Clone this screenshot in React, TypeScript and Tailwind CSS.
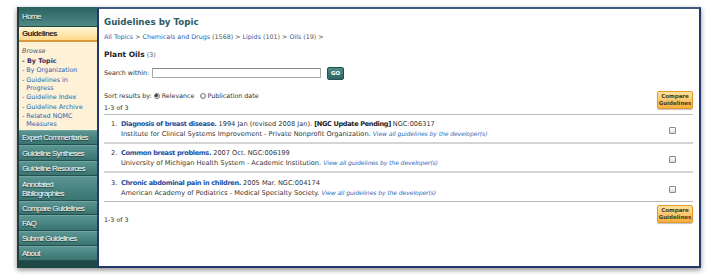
import React from "react";

const navItems = [
  { label: ["Expert Commentaries"], h: "h-[15px]" },
  { label: ["Guideline Syntheses"], h: "h-[16px]" },
  { label: ["Guideline Resources"], h: "h-[15px]" },
  { label: ["Annotated", "Bibliographies"], h: "h-[25px]" },
  { label: ["Compare Guidelines"], h: "h-[14px]" },
  { label: ["FAQ"], h: "h-[16px]" },
  { label: ["Submit Guidelines"], h: "h-[15px]" },
  { label: ["About"], h: "h-[15px]" },
];

const browseLinks = [
  { label: "By Topic", active: true },
  { label: "By Organization" },
  { label: "Guidelines in Progress", wrap: ["Guidelines in", "Progress"] },
  { label: "Guideline Index" },
  { label: "Guideline Archive" },
  { label: "Related NQMC Measures", wrap: ["Related NQMC", "Measures"] },
];

const results = [
  {
    title: "Diagnosis of breast disease.",
    meta: " 1994 Jan (revised 2008 Jan). ",
    pending: true,
    ngc: "NGC:006317",
    org: "Institute for Clinical Systems Improvement - Private Nonprofit Organization.",
  },
  {
    title: "Common breast problems.",
    meta: " 2007 Oct. ",
    ngc: "NGC:006199",
    org: "University of Michigan Health System - Academic Institution.",
  },
  {
    title: "Chronic abdominal pain in children.",
    meta: " 2005 Mar. ",
    ngc: "NGC:004174",
    org: "American Academy of Pediatrics - Medical Specialty Society.",
  },
];

const navText =
  "font-['Liberation_Sans',sans-serif] text-[8px] tracking-[-0.6px] leading-[9px] whitespace-nowrap";

const CompareButton = () => (
  <div className="w-[36px] h-[18px] rounded-[2px] border border-[#e39a2a] bg-gradient-to-b from-[#ffe29a] to-[#f8ad3a] shadow-[0_1px_1px_rgba(0,0,0,0.25)] flex flex-col items-center justify-center text-[5.5px] leading-[7px] font-bold text-[#4a3b17]">
    <span>Compare</span>
    <span>Guidelines</span>
  </div>
);

const Radio = ({ on }: { on?: boolean }) => (
  <span className="w-[6px] h-[6px] rounded-full border border-[#777] bg-gradient-to-b from-white to-[#ddd] flex items-center justify-center">
    {on && <span className="w-[3px] h-[3px] rounded-full bg-[#333]" />}
  </span>
);

export default function App() {
  return (
    <div className="w-[721px] h-[275px] bg-white overflow-hidden font-['DejaVu_Sans',sans-serif] text-[#333]">
      <div className="ml-[17px] mt-[7px] w-[684px] h-[261px] flex shadow-[0_2px_5px_rgba(0,0,0,0.45)]">
        {/* sidebar */}
        <div className="w-[80px] h-full border-l-2 border-[#263c3c] bg-[#1f4847] flex flex-col">
          <div className={`h-[20px] flex items-center pl-[3px] bg-gradient-to-b from-[#2a6160] to-[#4f8a87] border-b border-[#1f4a49] text-white [text-shadow:0_1px_1px_rgba(0,0,0,0.6)] ${navText}`}>
            Home
          </div>
          <div className={`h-[15px] flex items-center pl-[3px] bg-gradient-to-b from-[#fff6d6] to-[#fcd98a] border-b-2 border-[#d89a3c] text-[#2a2a2a] font-bold ${navText}`}>
            Guidelines
          </div>
          <div className="h-[88px] bg-[#fdf2d8] pl-[3px] pt-[5px] text-[6.4px] leading-[8px] whitespace-nowrap">
            <div className="italic text-[#555]">Browse</div>
            {browseLinks.map((l) => (
              <div key={l.label} className="mt-[1.5px] flex">
                <span className={l.active ? "text-[#3a2b58] font-bold" : "text-[#2c62b0]"}>-&nbsp;</span>
                <div className={l.active ? "text-[#3a2b58] font-bold" : "text-[#2c62b0]"}>
                  {l.wrap ? l.wrap.map((w) => <div key={w}>{w}</div>) : l.label}
                </div>
              </div>
            ))}
          </div>
          {navItems.map((n) => (
            <div
              key={n.label.join(" ")}
              className={`${n.h} flex flex-col justify-center pl-[3px] bg-gradient-to-b from-[#5a9592] to-[#3a7471] border-t border-[#6fa5a2] border-b border-b-[#234f4e] text-white [text-shadow:0_1px_1px_rgba(0,0,0,0.6)] ${navText}`}
            >
              {n.label.map((t) => (
                <span key={t}>{t}</span>
              ))}
            </div>
          ))}
          <div className="flex-1 bg-[#1f4847]" />
        </div>

        {/* content */}
        <div className="flex-1 h-full border-2 border-[#22386a] border-t-[#3f5a80] bg-white pl-[5px] pr-[6px] text-[6.35px] whitespace-nowrap">
          <div className="h-[14px] mt-[7px] flex items-center text-[8.7px] font-bold text-[#2d5a66]">
            Guidelines by Topic
          </div>
          <div className="h-[10px] mt-[2px] flex items-center text-[#555]">
            <span className="text-[#2c62b0]">All Topics</span>&nbsp;&gt;&nbsp;
            <span className="text-[#2c62b0]">Chemicals and Drugs</span>&nbsp;(1568)&nbsp;&gt;&nbsp;
            <span className="text-[#2c62b0]">Lipids</span>&nbsp;(101)&nbsp;&gt;&nbsp;
            <span className="text-[#2c62b0]">Oils</span>&nbsp;(19)&nbsp;&gt;
          </div>
          <div className="h-[12px] mt-[7px] flex items-center">
            <span className="text-[7.5px] font-bold text-[#222]">Plant Oils</span>
            <span className="ml-[2px] text-[#555]">(3)</span>
          </div>
          <div className="h-[14px] mt-[5px] flex items-center">
            <span>Search within:</span>
            <div className="ml-[3px] w-[169px] h-[10px] border border-[#aaa] border-t-[#888] bg-white" />
            <div className="ml-[6px] w-[17px] h-[13px] rounded-[2px] border border-[#23504e] bg-gradient-to-b from-[#4f8c89] to-[#2d6664] text-white font-bold text-[5.5px] flex items-center justify-center">
              GO
            </div>
          </div>
          <div className="mt-[11px] h-[21px] flex justify-between items-start">
            <div>
              <div className="h-[9px] flex items-center">
                <span>Sort results by:</span>
                <span className="ml-[2px]">
                  <Radio on />
                </span>
                <span className="ml-[2px]">Relevance</span>
                <span className="ml-[5px]">
                  <Radio />
                </span>
                <span className="ml-[2px]">Publication date</span>
              </div>
              <div className="mt-[3px] h-[10px] flex items-center">1-3 of 3</div>
            </div>
            <CompareButton />
          </div>
          <div className="mt-[2px] border-t border-[#bbb]" />
          {results.map((r, i) => (
            <div
              key={r.title}
              className={`h-[29px] flex items-center ${i < 2 ? "border-b-2 border-[#d4d4d4]" : "border-b border-[#bbb]"}`}
            >
              <div className="flex-1 pl-[7px] pt-[2px] leading-[9px] text-[6.6px]">
                <div className="flex">
                  <span className="w-[10px]">{i + 1}.</span>
                  <span>
                    <b className="text-[#1f4f9e] tracking-[-0.35px]">{r.title}</b>
                    {r.meta}
                    {r.pending && <b className="text-[#222] tracking-[-0.35px]">[NGC Update Pending] </b>}
                    {r.ngc}
                  </span>
                </div>
                <div className="pl-[10px]">
                  {r.org} <i className="text-[#2f68b8] text-[6.1px] tracking-[-0.1px]">View all guidelines by the developer(s)</i>
                </div>
              </div>
              <span className="mr-[17px] mt-[4px] w-[7px] h-[7px] rounded-[1px] border border-[#888] bg-gradient-to-b from-white to-[#ddd]" />
            </div>
          ))}
          <div className="flex justify-between items-start">
            <div className="mt-[13px] h-[10px] flex items-center">1-3 of 3</div>
            <div className="mt-[3px]">
              <CompareButton />
            </div>
          </div>
        </div>
      </div>
    </div>
  );
}
